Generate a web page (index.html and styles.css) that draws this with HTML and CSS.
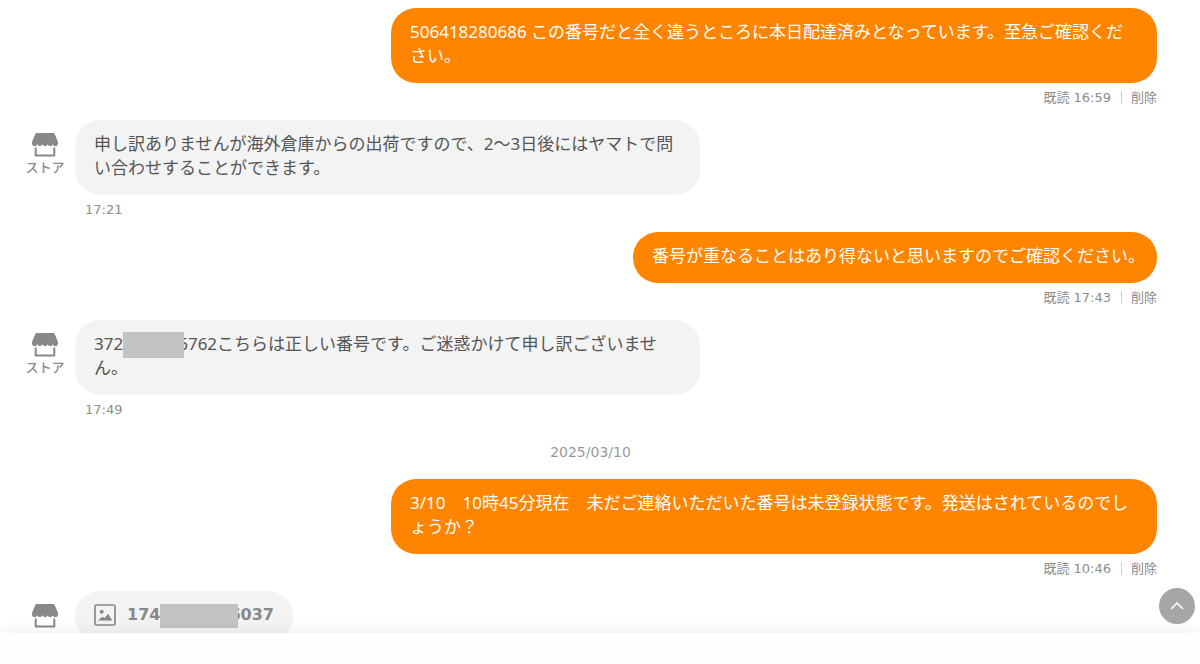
FILE: index.html
```
<!DOCTYPE html>
<html lang="ja">
<head>
<meta charset="utf-8">
<meta name="viewport" content="width=device-width, initial-scale=1">
<title>メッセージ</title>
<link rel="stylesheet" href="styles.css">
</head>
<body>
<svg class="sprite" aria-hidden="true">
  <symbol id="store" viewBox="0 0 26 24">
    <path d="M4.500 0h17c.5 0 .9.200 1.100.7L26 9v1.500c0 1.500-1.200 2.700-2.700 2.700-1.200 0-2.200-.8-2.600-1.900-.4 1.100-1.400 1.900-2.600 1.900s-2.200-.8-2.500-1.900c-.4 1.100-1.400 1.900-2.600 1.900s-2.200-.8-2.600-1.900c-.4 1.100-1.400 1.900-2.600 1.900s-2.100-.8-2.500-1.900c-.4 1.100-1.400 1.900-2.600 1.900C1.200 13.200 0 12 0 10.500V9L3.400.7C3.600.2 4 0 4.500 0z" fill="currentColor"/>
    <path d="M3.700 14.500v7.900h18.600v-7.900" fill="none" stroke="currentColor" stroke-width="2" stroke-linejoin="round"/>
  </symbol>
</svg>
<main class="chat">
  <article class="message mine">
    <p class="bubble">506418280686 この番号だと全く違うところに本日配達済みとなっています。至急ご確認くだ<br>さい。</p>
    <div class="meta"><span>既読 16:59</span><button class="delete" type="button">削除</button></div>
  </article>

  <article class="message store">
    <div class="sender"><svg class="store-icon" aria-hidden="true"><use href="#store"/></svg><span>ストア</span></div>
    <div class="content">
      <p class="bubble">申し訳ありませんが海外倉庫からの出荷ですので、2～3日後にはヤマトで問<br>い合わせすることができます。</p>
      <div class="meta"><time>17:21</time></div>
    </div>
  </article>

  <article class="message mine">
    <p class="bubble">番号が重なることはあり得ないと思いますのでご確認ください。</p>
    <div class="meta"><span>既読 17:43</span><button class="delete" type="button">削除</button></div>
  </article>

  <article class="message store">
    <div class="sender"><svg class="store-icon" aria-hidden="true"><use href="#store"/></svg><span>ストア</span></div>
    <div class="content">
      <p class="bubble">372<span class="mask"></span>6762こちらは正しい番号です。ご迷惑かけて申し訳ございませ<br>ん。</p>
      <div class="meta"><time>17:49</time></div>
    </div>
  </article>

  <time class="date" datetime="2025-03-10">2025/03/10</time>

  <article class="message mine">
    <p class="bubble">3/10　10時45分現在　未だご連絡いただいた番号は未登録状態です。発送はされているのでし<br>ょうか？</p>
    <div class="meta"><span>既読 10:46</span><button class="delete" type="button">削除</button></div>
  </article>

  <article class="message store">
    <div class="sender"><svg class="store-icon" aria-hidden="true"><use href="#store"/></svg><span>ストア</span></div>
    <div class="content">
      <a class="bubble file" href="#file">
        <svg class="image-icon" viewBox="0 0 22 22" aria-hidden="true">
          <rect x="1" y="1" width="20" height="20" rx="1.500" fill="none" stroke="currentColor" stroke-width="1.700"/>
          <circle cx="7.700" cy="7.700" r="2" fill="currentColor"/>
          <path d="M4 16.500l4.300-3.800 2.300 1.300 3.500-4.300 4.200 6.800z" fill="currentColor"/>
        </svg>
        <span>174<span class="mask mask-wide"></span>6037</span>
      </a>
    </div>
  </article>
</main>
<footer class="composer"></footer>
<button class="to-top" type="button" aria-label="上へ戻る">
  <svg class="chevron" viewBox="0 0 14 8" aria-hidden="true"><path d="M1 7l6-6 6 6" fill="none" stroke="currentColor" stroke-width="1.500"/></svg>
</button>
</body>
</html>
```
FILE: styles.css
```
* {
  box-sizing: border-box;
}

body {
  display: flex;
  flex-direction: column;
  height: 100vh;
  margin: 0;
  overflow: hidden;
  background: #fff;
  color: #8c8c8c;
  font-family: "DejaVu Sans", "Noto Sans CJK JP", sans-serif;
  font-size: 13px;
  line-height: 20px;
}

.sprite {
  position: absolute;
  width: 0;
  height: 0;
}

.chat {
  display: flex;
  flex: 1;
  flex-direction: column;
  gap: 12px;
  min-height: 0;
  padding: 8px 43px 0 24px;
  overflow: hidden;
}

.message {
  display: flex;
  flex-shrink: 0;
}

.mine {
  flex-direction: column;
  align-items: flex-end;
  align-self: flex-end;
  max-width: 766px;
}

.store {
  gap: 9px;
}

.content {
  flex: 1;
  max-width: 625px;
}

.bubble {
  margin: 0;
  padding: 12px 12px 15px 19px;
  border-radius: 25px;
  font-family: "Noto Sans", "Noto Sans CJK JP", sans-serif;
  font-size: 17px;
  line-height: 24px;
}

.mine .bubble {
  min-width: 0;
  background: #ff8500;
  color: #fff;
}

.mine .bubble:has(br) {
  width: 766px;
  max-width: 100%;
}

.store .bubble {
  background: #f3f3f3;
  color: #555;
}

.meta {
  display: flex;
  padding-top: 5px;
}

.store .meta {
  padding-left: 10px;
}

.delete {
  margin: 0 0 0 10px;
  padding: 0;
  border: 0;
  background: none;
  color: inherit;
  font: inherit;
  cursor: pointer;
}

.delete::before {
  display: inline-block;
  width: 1px;
  height: 13px;
  margin-right: 9px;
  background: #ccc;
  content: "";
  vertical-align: -2px;
}

.sender {
  display: flex;
  flex-direction: column;
  align-items: center;
  gap: 1px;
  width: 42px;
  padding-top: 13px;
  font-weight: 500;
}

.store-icon {
  width: 26px;
  height: 24px;
  color: #888;
}

.mask {
  display: inline-block;
  position: relative;
  width: 61px;
  height: 26px;
  margin: -4px -6px -4px 0;
  background: #c3c3c3;
  vertical-align: middle;
}

.mask-wide {
  width: 78px;
  height: 24px;
  margin-right: -9px;
}

.date {
  align-self: center;
  padding: 10px 0 5px;
  color: #999;
  font-size: 14px;
}

.store .file {
  display: inline-flex;
  align-items: center;
  gap: 11px;
  padding: 12px 19px 15px;
  color: #888;
  font-family: "DejaVu Sans", sans-serif;
  font-size: 16px;
  font-weight: 700;
  text-decoration: none;
}

.image-icon {
  width: 22px;
  height: 22px;
}

.composer {
  position: relative;
  flex: 0 0 31px;
  background: #fefefe;
  box-shadow: 0 0 16px rgba(0, 0, 0, 0.08);
}

.to-top {
  display: flex;
  position: fixed;
  right: 5px;
  bottom: 40px;
  align-items: center;
  justify-content: center;
  width: 36px;
  height: 36px;
  padding: 0;
  border: 0;
  border-radius: 50%;
  background: #a6a6a6;
  color: #fff;
  cursor: pointer;
}

.chevron {
  width: 14px;
  height: 8px;
}
```
